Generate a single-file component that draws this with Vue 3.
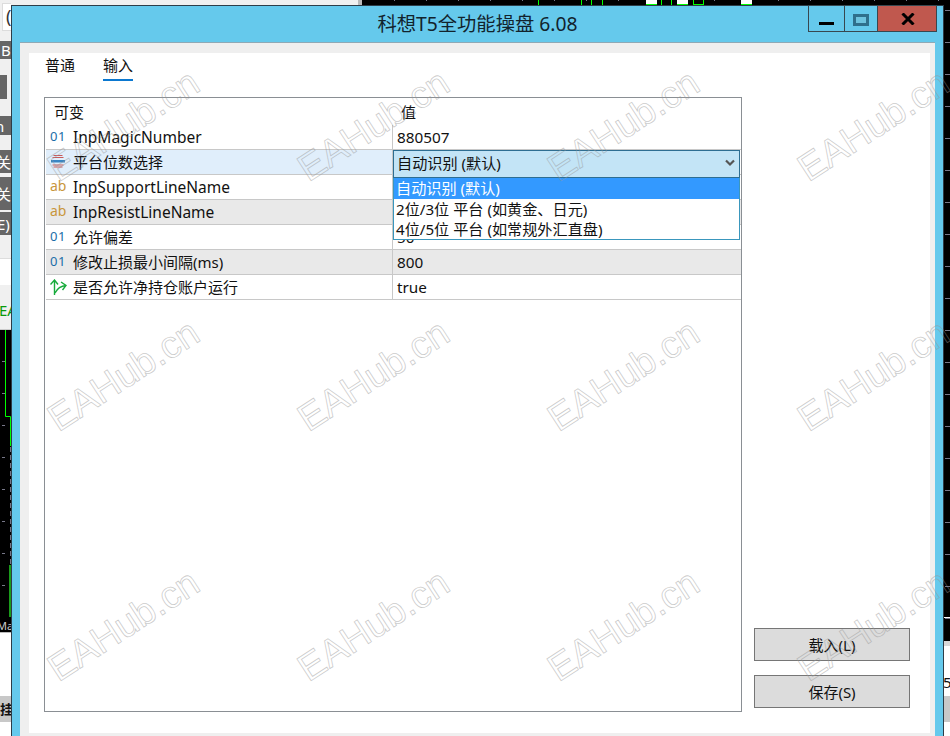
<script setup>
const rows = [
  { icon: 'num', name: 'InpMagicNumber', value: '880507' },
  { icon: 'enum', name: '平台位数选择', value: '', active: true },
  { icon: 'ab', name: 'InpSupportLineName', value: '' },
  { icon: 'ab', name: 'InpResistLineName', value: '', alt: true },
  { icon: 'num', name: '允许偏差', value: '50' },
  { icon: 'num', name: '修改止损最小间隔(ms)', value: '800', alt: true },
  { icon: 'bool', name: '是否允许净持仓账户运行', value: 'true' },
]
const isLatin = (s) => /^[A-Za-z]+$/.test(s)
const options = ['自动识别 (默认)', '2位/3位 平台 (如黄金、日元)', '4位/5位 平台 (如常规外汇直盘)']
const marks = Array.from({ length: 12 }, (_, i) => i)
const topTicks = Array.from({ length: 19 }, (_, i) => 394 + i * 32)
const solidCandles = [646, 677, 741]
const greenLines = [538, 581, 591, 602, 661, 671]
const leftTicks = [361, 393, 425, 457, 489, 521, 553, 585]
const rightTicks = Array.from({ length: 20 }, (_, i) => 10 + i * 32)
</script>

<template>
  <div class="desktop">
    <!-- chart and terminal fragments behind the dialog -->
    <svg class="top-chart" width="950" height="5" viewBox="0 0 950 5">
      <rect x="358" y="0" width="4" height="5" fill="#b9b9b9" />
      <rect x="362" y="0" width="588" height="5" fill="#000" />
      <rect v-for="x in topTicks" :key="x" :x="x" y="0" width="1" height="1" fill="#778" />
      <rect v-for="x in greenLines" :key="x" :x="x" y="0" width="1" height="5" fill="#0f0" />
      <rect v-for="x in solidCandles" :key="x" :x="x" y="0" width="11" height="5" fill="#fff" />
      <rect v-for="x in solidCandles" :key="'b' + x" :x="x" y="4" width="11" height="1" fill="#0f0" />
      <rect x="693.5" y="-1" width="10" height="5.5" fill="none" stroke="#0f0" />
    </svg>

    <div class="left-strip">
      <div class="input-frag">(</div>
      <div class="frag f1">B</div>
      <div class="frag f2"></div>
      <div class="frag f3">n</div>
      <div class="frag f4">关</div>
      <div class="frag f5">关</div>
      <div class="frag f6">E)</div>
      <div class="white-band"></div>
      <div class="ea-band">EA</div>
      <svg class="left-chart" width="11" height="302" viewBox="0 330 11 302">
        <rect x="0" y="330" width="11" height="302" fill="#000" />
        <rect v-for="y in leftTicks" :key="y" x="2" :y="y" width="3" height="1" fill="#778" />
        <path d="M5.5 330V416.5H10.5V446" fill="none" stroke="#0f0" />
        <path d="M10.5 447V565" fill="none" stroke="#778" stroke-dasharray="5 3" />
        <rect x="9" y="565" width="2" height="52" fill="#1b9c1b" />
        <text x="-3" y="630" class="mar">Mar</text>
      </svg>
      <div class="white-low"></div>
      <div class="gray-low">挂</div>
      <div class="white-fill"></div>
    </div>

    <div class="right-strip">
      <svg class="right-chart" width="6" height="641" viewBox="0 0 6 641">
        <rect width="6" height="641" fill="#000" />
        <rect v-for="y in rightTicks" :key="y" x="1" :y="y" width="5" height="1" fill="#778" />
        <rect x="0" y="617" width="6" height="1" fill="#fff" />
      </svg>
      <div class="right-gray"></div>
      <div class="right-white">5</div>
      <div class="right-band"></div>
      <div class="white-fill"></div>
    </div>

    <!-- dialog -->
    <section class="window">
      <header class="titlebar">
        <h1 class="title">科想T5全功能操盘 6.08</h1>
        <div class="controls">
          <button class="ctl ctl-min"><span class="min-bar"></span></button>
          <button class="ctl ctl-max"><span class="max-box"></span></button>
          <button class="ctl ctl-close">
            <svg width="14" height="12" viewBox="0 0 14 12">
              <path d="M1.5 .5L12.5 11.5M12.5 .5L1.5 11.5" stroke="#000" stroke-width="3" fill="none" />
            </svg>
          </button>
        </div>
      </header>

      <div class="panel">
        <div class="sheet">
          <nav class="tabs">
            <span class="tab">普通</span>
            <span class="tab tab-on">输入</span>
          </nav>
          <div class="body">
            <div class="table">
              <div class="thead">
                <span class="th-name">可变</span>
                <span class="th-value">值</span>
              </div>
              <div
                v-for="row in rows"
                :key="row.name"
                class="row"
                :class="{ alt: row.alt, active: row.active }"
              >
                <div class="cell-name">
                  <span class="icon">
                    <span v-if="row.icon === 'num'" class="i-num">01</span>
                    <span v-else-if="row.icon === 'ab'" class="i-ab">ab</span>
                    <svg v-else-if="row.icon === 'enum'" width="16" height="16" viewBox="0 0 16 16">
                      <path d="M3.5 1.5H12.5M2.5 3.5H13.5" stroke="#c95b5b" fill="none" />
                      <rect x="1" y="6" width="14" height="2.5" fill="#3a86c4" />
                      <path d="M2.5 11H13.5M3.5 13H12.5" stroke="#c95b5b" fill="none" />
                    </svg>
                    <svg v-else width="17" height="17" viewBox="0 0 17 17">
                      <path d="M4.5 16V1.5M.5 5.5L4.5 1L8 5.5M5 14C7 10 10 7 16 6.5M11 3L16 6.5L12.5 11" stroke="#18ab3c" stroke-width="1.4" fill="none" />
                    </svg>
                  </span>
                  <span class="name" :class="{ latin: isLatin(row.name) }">{{ row.name }}</span>
                </div>
                <div class="cell-value">
                  <span>{{ row.value }}</span>
                  <div v-if="row.active" class="combo">
                    <div class="combo-box">
                      <span>{{ options[0] }}</span>
                      <svg width="10" height="8" viewBox="0 0 10 8">
                        <path d="M1 1.5L5 5.5L9 1.5" stroke="#555" stroke-width="2.2" fill="none" />
                      </svg>
                    </div>
                    <ul class="combo-list">
                      <li
                        v-for="(opt, i) in options"
                        :key="opt"
                        class="opt"
                        :class="{ 'opt-on': i === 0 }"
                      >{{ opt }}</li>
                    </ul>
                  </div>
                </div>
              </div>
            </div>
            <aside class="side">
              <button class="btn">载入(L)</button>
              <button class="btn">保存(S)</button>
            </aside>
          </div>
        </div>
      </div>
    </section>

    <div class="watermarks">
      <div v-for="m in marks" :key="m" class="wm-cell"><span class="wm">EAHub.cn</span></div>
    </div>
  </div>
</template>

<style scoped>
.desktop {
  position: relative;
  width: 950px;
  height: 736px;
  overflow: hidden;
  background: #f0f0f0;
  font-family: "Noto Sans", "Noto Sans CJK SC", sans-serif;
  font-size: 15px;
  color: #111;
}
.top-chart {
  position: absolute;
  left: 0;
  top: 0;
  display: block;
}
.left-strip {
  position: absolute;
  left: 0;
  top: 0;
  bottom: 0;
  width: 11px;
  overflow: hidden;
  display: flex;
  flex-direction: column;
  align-items: flex-start;
  background: #f0f0f0;
}
.input-frag {
  margin: 3px 0 0 2px;
  width: 20px;
  height: 28px;
  flex: none;
  box-sizing: border-box;
  border: 1px solid #dcdcdc;
  background: #fff;
  padding-left: 3px;
  font-size: 18px;
  line-height: 25px;
  color: #333;
}
.frag {
  width: 11px;
  flex: none;
  background: #666;
  color: #fff;
  font-size: 15px;
  overflow: hidden;
  white-space: nowrap;
  display: flex;
  align-items: center;
}
.f1 { height: 18px; margin-top: 10px; padding-left: 1px; width: 10px; }
.f2 { height: 24px; margin-top: 16px; width: 7px; }
.f3 { height: 19px; margin-top: 17px; text-indent: -5px; }
.f4 { height: 23px; margin-top: 15px; text-indent: -4px; }
.f5 { height: 33px; margin-top: 4px; text-indent: -4px; }
.f6 { height: 23px; margin-top: 2px; text-indent: -3px; }
.white-band {
  flex: none;
  width: 11px;
  height: 27px;
  margin-top: 23px;
  background: #fff;
  border-top: 1px solid #ddd;
  box-sizing: border-box;
}
.ea-band {
  flex: none;
  width: 11px;
  height: 45px;
  box-sizing: border-box;
  padding-top: 14px;
  border-bottom: 1px solid #ccc;
  color: #0a9a0a;
  font-size: 15px;
  line-height: 22px;
  text-indent: -1px;
  white-space: nowrap;
  overflow: hidden;
}
.left-chart { display: block; flex: none; }
.mar { fill: #ccc; font-size: 11px; }
.white-low { flex: none; width: 11px; height: 64px; background: #fff; border-top: 1px solid #bbb; box-sizing: border-box; }
.gray-low {
  flex: none;
  width: 11px;
  height: 26px;
  background: #c8c8c8;
  font-size: 13px;
  font-weight: 700;
  line-height: 26px;
  overflow: hidden;
  white-space: nowrap;
}
.white-fill { flex: 1; width: 100%; background: #fff; }
.right-strip {
  position: absolute;
  left: 944px;
  top: 0;
  bottom: 0;
  width: 6px;
  display: flex;
  flex-direction: column;
}
.right-chart { display: block; flex: none; }
.right-gray { flex: none; height: 5px; background: #d8d8d8; }
.right-white {
  flex: none;
  height: 50px;
  background: #fff;
  padding-top: 25px;
  box-sizing: border-box;
  font-size: 15px;
  line-height: 22px;
  overflow: hidden;
  text-indent: -1px;
}
.right-band { flex: none; height: 26px; background: #c8c8c8; }

.window {
  position: absolute;
  left: 11px;
  top: 5px;
  width: 933px;
  height: 740px;
  box-sizing: border-box;
  background: #65c9ec;
  border: 1px solid #2d3d48;
  display: flex;
  flex-direction: column;
}
.titlebar {
  position: relative;
  flex: none;
  height: 36px;
  display: flex;
  align-items: center;
  justify-content: center;
}
.title {
  margin: 0;
  font-size: 19.3px;
  font-weight: 400;
  line-height: 36px;
  color: #12232c;
}
.controls {
  position: absolute;
  right: 6px;
  top: -1px;
  display: flex;
  height: 27px;
}
.ctl {
  box-sizing: border-box;
  height: 27px;
  padding: 0;
  background: transparent;
  border: 1px solid #37474f;
  border-left: 0;
  display: flex;
  align-items: center;
  justify-content: center;
}
.ctl-min { width: 37px; border-left: 1px solid #37474f; }
.ctl-max { width: 33px; }
.ctl-close { width: 59px; background: #c0584e; }
.min-bar { width: 15px; height: 3px; background: #000; margin-top: 9px; }
.max-box { width: 16px; height: 12px; box-sizing: border-box; border: 3px solid #2f6f8c; margin-top: 2px; background: #6ec3df; }
.ctl-close svg { margin-top: 1px; margin-left: 1px; }

.panel {
  flex: 1;
  margin: 0 8px;
  box-sizing: border-box;
  background: #efefef;
  border-top: 1px solid #8fa9b5;
  padding: 10px 5px 0 9px;
  display: flex;
  min-height: 0;
  height: 694px;
}
.sheet {
  flex: 1;
  height: 680px;
  background: #fff;
  padding-left: 15px;
  box-sizing: border-box;
  display: flex;
  flex-direction: column;
}
.tabs {
  flex: none;
  height: 44px;
  display: flex;
  gap: 28px;
  padding-left: 1px;
}
.tab {
  height: 28px;
  box-sizing: border-box;
  line-height: 24px;
  font-size: 15px;
  display: block;
}
.tab-on { border-bottom: 2px solid #0b78d0; }
.body {
  flex: none;
  display: flex;
  gap: 12px;
  height: 615px;
}
.table {
  flex: none;
  width: 698px;
  height: 615px;
  box-sizing: border-box;
  border: 1px solid #8a8f94;
  padding-left: 1px;
  display: flex;
  flex-direction: column;
}
.thead {
  flex: none;
  height: 27px;
  display: grid;
  grid-template-columns: 347px 1fr;
  line-height: 28px;
}
.th-name { padding-left: 8px; }
.th-value { padding-left: 8px; }
.row {
  flex: none;
  height: 25px;
  box-sizing: border-box;
  border-bottom: 1px solid #c8c8c8;
  display: grid;
  grid-template-columns: 346px 1fr;
  margin-right: 0;
  line-height: 24px;
}
.row.alt { background: #e9e9e9; }
.cell-name {
  display: flex;
  align-items: center;
  padding-left: 4px;
  min-width: 0;
}
.row.active .cell-name { background: #e0eefb; }
.cell-value {
  position: relative;
  border-left: 1px solid #c8c8c8;
  padding-left: 4px;
  font-size: 15.3px;
}
.icon {
  flex: none;
  width: 23px;
  height: 24px;
  display: flex;
  align-items: center;
}
.i-num {
  color: #1c6da8;
  font-size: 13px;
  line-height: 20px;
  margin-top: -3px;
  letter-spacing: .5px;
}
.i-ab {
  color: #c8963c;
  font-size: 14px;
  line-height: 20px;
  margin-top: -3px;
}
.name { white-space: nowrap; }
.name.latin { font-size: 15.5px; }
.combo {
  position: absolute;
  left: 0;
  top: 0;
  width: 347px;
  z-index: 2;
  font-size: 15.15px;
}
.combo-box {
  box-sizing: border-box;
  height: 28px;
  border: 1px solid #2e6e92;
  background: #c3e4f6;
  padding: 0 4px 2px 3px;
  display: flex;
  align-items: center;
  justify-content: space-between;
}
.combo-list {
  list-style: none;
  margin: 0;
  padding: 0;
  box-sizing: border-box;
  height: 62px;
  background: #fff;
  border: 1px solid #3a97bd;
  border-top: 0;
}
.opt {
  height: 20px;
  line-height: 20px;
  padding-left: 2px;
  white-space: nowrap;
}
.opt:first-child { height: 21px; }
.opt-on { background: #3399ff; color: #fff; }

.side {
  flex: none;
  width: 156px;
  display: flex;
  flex-direction: column;
  justify-content: flex-end;
  gap: 14px;
  padding-bottom: 4px;
}
.btn {
  height: 33px;
  box-sizing: border-box;
  background: #dcdcdc;
  border: 1px solid #767676;
  font: inherit;
  font-size: 15px;
  color: #111;
  padding: 0;
}

.watermarks {
  position: absolute;
  left: -1px;
  top: 0;
  display: grid;
  grid-template-columns: repeat(4, 250px);
  grid-auto-rows: 250px;
  pointer-events: none;
  z-index: 5;
}
.wm-cell {
  display: flex;
  align-items: center;
  justify-content: center;
}
.wm {
  font-family: "Liberation Sans", sans-serif;
  font-size: 38px;
  color: transparent;
  -webkit-text-stroke: .8px rgba(150, 150, 150, .5);
  transform: rotate(-33deg);
  white-space: nowrap;
}
</style>
